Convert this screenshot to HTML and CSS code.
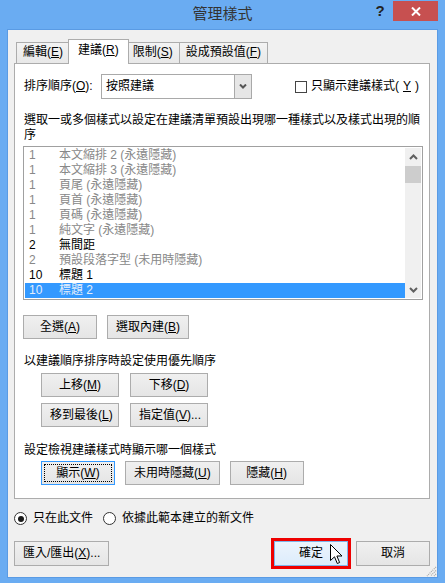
FILE: index.html
```html
<!DOCTYPE html>
<html lang="zh-Hant">
<head>
  <meta charset="UTF-8" />
  <title>管理樣式</title>
  <link rel="stylesheet" href="styles.css">
</head>
<body>

<div class="dialog">
  <div class="titlebar">
    <span></span>
    <span class="title">管理樣式</span>
    <div class="title-btns">
      <span class="help">?</span>
      <span class="close">
        <svg width="10" height="9" viewBox="0 0 10 9"><path d="M1 0.5 L9 8.5 M9 0.5 L1 8.5" stroke="#fff" stroke-width="2"/></svg>
      </span>
    </div>
  </div>

  <div class="client">
    <div class="tabs">
      <div class="tab">編輯(<u>E</u>)</div>
      <div class="tab active">建議(<u>R</u>)</div>
      <div class="tab">限制(<u>S</u>)</div>
      <div class="tab">設成預設值(<u>F</u>)</div>
    </div>

    <div class="panel">
      <div class="sort-row">
        <span class="sort-label">排序順序(<u>O</u>):</span>
        <div class="combo">
          <span class="combo-text">按照建議</span>
          <span class="combo-btn">
            <svg width="8" height="5" viewBox="0 0 8 5"><polyline points="1,0.5 4,3.5 7,0.5" fill="none" stroke="#555" stroke-width="2"/></svg>
          </span>
        </div>
        <label class="check"><span class="checkbox"></span>只顯示建議樣式(<u>Y</u>)</label>
      </div>

      <p class="desc">選取一或多個樣式以設定在建議清單預設出現哪一種樣式以及樣式出現的順序</p>

      <div class="listbox">
        <ul class="rows">
          <li class="muted"><span class="num">1</span>本文縮排 2 (永遠隱藏)</li>
          <li class="muted"><span class="num">1</span>本文縮排 3 (永遠隱藏)</li>
          <li class="muted"><span class="num">1</span>頁尾 (永遠隱藏)</li>
          <li class="muted"><span class="num">1</span>頁首 (永遠隱藏)</li>
          <li class="muted"><span class="num">1</span>頁碼 (永遠隱藏)</li>
          <li class="muted"><span class="num">1</span>純文字 (永遠隱藏)</li>
          <li><span class="num">2</span>無間距</li>
          <li class="muted"><span class="num">2</span>預設段落字型 (未用時隱藏)</li>
          <li><span class="num">10</span>標題 1</li>
          <li class="selected"><span class="num">10</span>標題 2</li>
        </ul>
        <div class="scrollbar">
          <span class="arrow">
            <svg width="9" height="6" viewBox="0 0 9 6"><polyline points="1,5 4.5,1.5 8,5" fill="none" stroke="#606060" stroke-width="2"/></svg>
          </span>
          <span class="thumb"></span>
          <span class="track"></span>
          <span class="arrow">
            <svg width="9" height="6" viewBox="0 0 9 6"><polyline points="1,1 4.5,4.5 8,1" fill="none" stroke="#606060" stroke-width="2"/></svg>
          </span>
        </div>
      </div>

      <div class="btn-row">
        <button class="btn">全選(<u>A</u>)</button>
        <button class="btn">選取內建(<u>B</u>)</button>
      </div>

      <p class="caption">以建議順序排序時設定使用優先順序</p>
      <div class="btn-grid">
        <button class="btn">上移(<u>M</u>)</button>
        <button class="btn">下移(<u>D</u>)</button>
        <button class="btn">移到最後(<u>L</u>)</button>
        <button class="btn">指定值(<u>V</u>)...</button>
      </div>

      <p class="caption caption-low">設定檢視建議樣式時顯示哪一個樣式</p>
      <div class="btn-row indent">
        <button class="btn focused">顯示(<u>W</u>)</button>
        <button class="btn">未用時隱藏(<u>U</u>)</button>
        <button class="btn">隱藏(<u>H</u>)</button>
      </div>
    </div>

    <div class="radio-row">
      <label class="radio"><span class="dot checked"></span>只在此文件</label>
      <label class="radio"><span class="dot"></span>依據此範本建立的新文件</label>
    </div>

    <div class="footer">
      <button class="btn">匯入/匯出(<u>X</u>)...</button>
      <button class="btn ok">確定</button>
      <button class="btn">取消</button>
    </div>

    <svg class="cursor" width="13" height="21" viewBox="0 0 13 21"><polygon points="0.5,0.5 0.5,16.5 4.5,12.8 7.3,19.5 9.6,18.5 6.9,12 12,12" fill="#fff" stroke="#000" stroke-width="1"/></svg>
    <svg class="grip" width="11" height="11" viewBox="0 0 11 11"><path d="M10 1 L1 10 M10 4.5 L4.5 10 M10 8 L8 10" stroke="#a8a8a8" stroke-width="1.2" stroke-dasharray="1 1"/></svg>
  </div>
</div>

</body>
</html>
```

FILE: styles.css
```css
:root {
  --frame: #6aacf2;
  --face: #f0f0f0;
  --line: #acacac;
  --select: #3399ff;
}

* {
  box-sizing: border-box;
}

body {
  margin: 0;
  background: var(--frame);
  font-family: "Liberation Sans", "Noto Sans CJK TC", sans-serif;
  font-size: 12px;
  line-height: 15px;
  color: #000;
}

u {
  text-decoration: underline;
  text-underline-offset: 1px;
}

.dialog {
  width: 445px;
  height: 583px;
  display: flex;
  flex-direction: column;
}

/* title bar */
.titlebar {
  height: 29px;
  display: grid;
  grid-template-columns: 1fr auto 1fr;
  align-items: start;
}

.title {
  font-size: 15px;
  line-height: 28px;
  color: #333;
}

.title-btns {
  justify-self: end;
  display: flex;
  margin-top: 1px;
  margin-right: 7px;
}

.help {
  width: 26px;
  text-align: center;
  font-weight: 700;
  font-size: 15px;
  line-height: 20px;
  color: #222;
}

.close {
  width: 45px;
  height: 20px;
  background: #c75050;
  display: flex;
  align-items: center;
  justify-content: center;
}

/* client area */
.client {
  flex: 1;
  position: relative;
  margin: 0 7px 5px;
  border: 1px solid #5a9be4;
  background: var(--face);
  padding: 0 6px 0 6px;
}

.tabs {
  display: flex;
  align-items: flex-end;
  height: 24px;
  margin-top: 9px;
  padding-left: 2px;
  position: relative;
  z-index: 1;
}

.tab {
  height: 21px;
  padding: 0 6px;
  border: 1px solid var(--line);
  border-bottom: none;
  background: linear-gradient(#f3f3f3, #e8e8e8);
  line-height: 19px;
  white-space: nowrap;
}

.tab + .tab {
  margin-left: -1px;
}

.tab.active {
  height: 25px;
  margin: 0 -2px -1px;
  padding: 0 9px 2px;
  background: #fff;
  line-height: 21px;
  position: relative;
}

.panel {
  margin-right: 1px;
  border: 1px solid var(--line);
  background: #fff;
  padding: 10px 6px 13px 8px;
}

.sort-row {
  display: flex;
  align-items: center;
  height: 25px;
}

.sort-label {
  width: 78px;
  padding-left: 1px;
}

.combo {
  width: 151px;
  height: 25px;
  border: 1px solid #a9a9a9;
  display: flex;
}

.combo-text {
  flex: 1;
  padding-left: 4px;
  line-height: 23px;
}

.combo-btn {
  width: 17px;
  background: #e6e6e6;
  border-left: 1px solid #a9a9a9;
  display: flex;
  align-items: center;
  justify-content: center;
}

.check {
  margin-left: auto;
  margin-right: 4px;
  display: flex;
  align-items: center;
  gap: 4px;
}

.checkbox {
  width: 12px;
  height: 12px;
  border: 1px solid #444;
  background: #fff;
}

.desc {
  margin: 14px 0 0 1px;
}

/* list box */
.listbox {
  margin-top: 3px;
  border: 1px solid #a0a0a0;
  padding: 1px;
  display: flex;
}

.rows {
  flex: 1;
  list-style: none;
  margin: 0;
  padding: 0;
}

.rows li {
  height: 15px;
  padding-left: 4px;
  white-space: nowrap;
}

.rows li.muted {
  color: #888;
}

.rows li.selected {
  background: var(--select);
  color: #e2edfb;
}

.num {
  display: inline-block;
  width: 30px;
}

.scrollbar {
  width: 16px;
  background: var(--face);
  display: flex;
  flex-direction: column;
}

.arrow {
  height: 17px;
  display: flex;
  align-items: center;
  justify-content: center;
}

.thumb {
  height: 17px;
  margin-top: 1px;
  background: #cdcdcd;
}

.track {
  flex: 1;
}

/* buttons */
.btn {
  height: 24px;
  min-width: 74px;
  padding: 0 8px;
  border: 1px solid var(--line);
  background: linear-gradient(#f0f0f0, #e5e5e5);
  font: inherit;
  color: #000;
  position: relative;
  white-space: nowrap;
}

.btn-row {
  display: flex;
  gap: 10px;
  margin-top: 15px;
}

.btn-row.indent {
  margin: 3px 0 0 18px;
}

.caption {
  margin: 15px 0 0 1px;
}

.caption-low {
  margin-top: 16px;
}

.btn-grid {
  display: grid;
  grid-template-columns: 78px 78px;
  gap: 6px 11px;
  margin: 4px 0 0 18px;
}

.btn-grid .btn {
  width: 78px;
}

.btn.focused {
  border-color: var(--select);
}

.btn.focused::after {
  content: '';
  position: absolute;
  top: 2px; left: 2px; right: 2px; bottom: 2px;
  border: 1px dotted #000;
}

/* bottom */
.radio-row {
  display: flex;
  gap: 10px;
  margin-top: 12px;
  height: 15px;
}

.radio {
  display: flex;
  align-items: center;
  gap: 6px;
}

.dot {
  width: 13px;
  height: 13px;
  border: 1px solid #333;
  border-radius: 50%;
  background: #fff;
  display: flex;
  align-items: center;
  justify-content: center;
}

.dot.checked::before {
  content: '';
  width: 6px;
  height: 6px;
  border-radius: 50%;
  background: #1a1a1a;
}

.footer {
  display: flex;
  margin-top: 15px;
  margin-right: 1px;
}

.footer .btn {
  height: 25px;
}

.footer .ok {
  margin-left: auto;
  margin-right: 8px;
  background: linear-gradient(#ecf4fc, #dcecfc);
  border-color: #7eb4ea;
  outline: 3px solid #ee0000;
}

.cursor {
  position: absolute;
  left: 322px;
  top: 514px;
}

.grip {
  position: absolute;
  right: 0;
  bottom: 0;
}
```
